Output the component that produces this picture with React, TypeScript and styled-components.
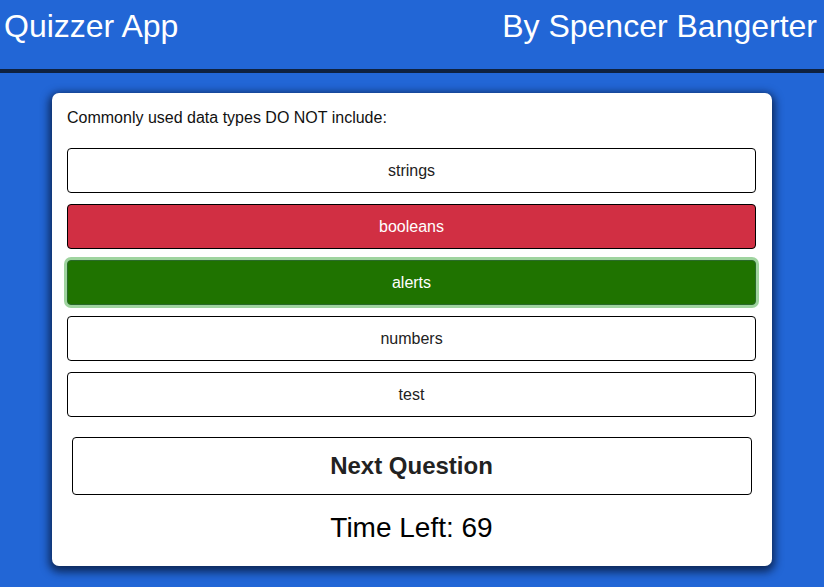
import React from 'react';
import styled, { createGlobalStyle, css } from 'styled-components';

const GlobalStyle = createGlobalStyle`
    body {
        margin: 0;
        background: #2266d6;
        font-family: "Liberation Sans", Arial, sans-serif;
    }
`;

const Page = styled.div`
    min-height: 587px;
    background: #2266d6;
`;

const Header = styled.header`
    display: flex;
    justify-content: space-between;
    align-items: flex-start;
    height: 69px;
    padding: 0 7px 0 4px;
    border-bottom: 4px solid #0f213f;
    color: #fff;
    .title {
        margin: 8px 0 0;
        font-size: 32px;
        font-weight: normal;
    }
`;

const Card = styled.main`
    width: 720px;
    margin: 20px auto 0;
    padding: 16px 16px 22px 15px;
    box-sizing: border-box;
    background: #fff;
    border-radius: 7px;
    box-shadow: 0 3px 8px 3px rgba(5, 20, 50, 0.75);
`;

const Question = styled.p`
    margin: 0 0 21px;
    font-size: 16px;
    color: #111;
`;

const Options = styled.div`
    display: flex;
    flex-direction: column;
    gap: 11px;
`;

type Status = 'plain' | 'wrong' | 'right';

const Option = styled.button<{ $status: Status }>`
    height: 45px;
    font-family: inherit;
    font-size: 16px;
    color: #222;
    background: #fff;
    border: 1px solid #000;
    border-radius: 4px;
    ${p => p.$status === 'wrong' && css`
        background: #d12f43;
        color: #fff;
    `}
    ${p => p.$status === 'right' && css`
        background: #1f7300;
        color: #fff;
        border-color: #2a6a2a;
        box-shadow: 0 0 0 3px #9fd49f;
    `}
`;

const NextButton = styled.button`
    display: block;
    width: 680px;
    height: 58px;
    margin: 20px auto 0;
    font-family: inherit;
    font-size: 24px;
    font-weight: bold;
    color: #222;
    background: #fff;
    border: 1px solid #000;
    border-radius: 4px;
`;

const Timer = styled.div`
    margin-top: 17px;
    text-align: center;
    font-size: 28px;
    color: #000;
`;

const answers: { label: string; status: Status }[] = [
    { label: 'strings', status: 'plain' },
    { label: 'booleans', status: 'wrong' },
    { label: 'alerts', status: 'right' },
    { label: 'numbers', status: 'plain' },
    { label: 'test', status: 'plain' },
];

export default function App() {
    return <Page>
        <GlobalStyle />
        <Header>
            <h1 className='title'>Quizzer App</h1>
            <h1 className='title'>By Spencer Bangerter</h1>
        </Header>
        <Card>
            <Question>Commonly used data types DO NOT include:</Question>
            <Options>
                {answers.map(a => <Option key={a.label} $status={a.status}>{a.label}</Option>)}
            </Options>
            <NextButton>Next Question</NextButton>
            <Timer>Time Left: 69</Timer>
        </Card>
    </Page>
}
